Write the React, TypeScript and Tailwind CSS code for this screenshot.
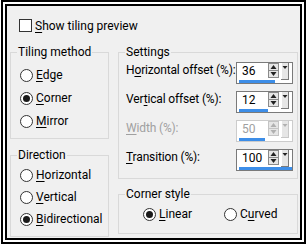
import React from "react";

function U({ children }: { children: React.ReactNode }) {
  return <span className="underline underline-offset-[2px] decoration-[1px]">{children}</span>;
}

function Radio({ checked, label, className = "" }: { checked?: boolean; label: React.ReactNode; className?: string }) {
  return (
    <div className={`flex items-center h-[20px] ${className}`}>
      <span className="w-[13px] h-[13px] rounded-full border border-[#333333] bg-white flex items-center justify-center shrink-0">
        {checked && <span className="w-[7px] h-[7px] rounded-full bg-[#1a1a1a]" />}
      </span>
      <span className="ml-[3px] leading-[16px] whitespace-nowrap">{label}</span>
    </div>
  );
}

function Group({ title, className = "", children }: { title: string; className?: string; children: React.ReactNode }) {
  return (
    <fieldset className={`border border-[#d9d9d9] ${className}`}>
      <legend className="ml-[6px] px-[1px] leading-[16px]">{title}</legend>
      {children}
    </fieldset>
  );
}

function SpinButtons({ disabled }: { disabled?: boolean }) {
  const stroke = disabled ? "#c4c4c4" : "#8a8a8a";
  const fill = disabled ? "#b0b0b0" : "#222222";
  return (
    <svg width="11" height="15" viewBox="0 0 11 15" className="shrink-0">
      <rect x="0.5" y="0.5" width="10" height="14" fill="#e6e6e6" stroke={stroke} />
      <line x1="1" y1="7.5" x2="10" y2="7.5" stroke={stroke} />
      <polygon points="5.5,2 8.5,6 2.5,6" fill={fill} />
      <polygon points="2.5,9 8.5,9 5.5,13" fill={fill} />
    </svg>
  );
}

function DropButton({ disabled }: { disabled?: boolean }) {
  const fill = disabled ? "#b0b0b0" : "#222222";
  return (
    <svg width="8" height="17" viewBox="0 0 8 17" className="shrink-0">
      <rect x="0" y="0" width="8" height="17" fill="#e6e6e6" />
      <line x1="0.5" y1="0" x2="0.5" y2="17" stroke="#ffffff" />
      <line x1="7.5" y1="0" x2="7.5" y2="17" stroke={disabled ? "#c8c8c8" : "#7a7a7a"} />
      <line x1="0" y1="16.5" x2="8" y2="16.5" stroke={disabled ? "#c8c8c8" : "#7a7a7a"} />
      <polygon points="1.5,3 6.5,3 4,6" fill={fill} />
    </svg>
  );
}

function Spin({ value, bar, disabled }: { value: string; bar: number; disabled?: boolean }) {
  return (
    <div
      className={`w-[57px] h-[22px] border bg-white flex flex-col shrink-0 ${
        disabled ? "border-[#cccccc] text-[#a0a0a0]" : "border-[#7a7a7a] text-black"
      }`}
    >
      <div className="flex items-start h-[17px]">
        <span className="w-[31px] pl-[5px] leading-[16px]">{value}</span>
        <SpinButtons disabled={disabled} />
        <span className="w-[2px]" />
        <DropButton disabled={disabled} />
      </div>
      <div className="h-[3px] ml-[2px]">
        <div className="h-[3px] bg-[#3d8ee8]" style={{ width: bar }} />
      </div>
    </div>
  );
}

function Row({ label, children, disabled }: { label: React.ReactNode; children: React.ReactNode; disabled?: boolean }) {
  return (
    <div className="flex items-start h-[22px]">
      <span
        className={`flex-1 min-w-0 leading-[16px] whitespace-nowrap tracking-[-0.15px] ${disabled ? "text-[#a0a0a0]" : ""}`}
      >
        {label}
      </span>
      {children}
    </div>
  );
}

export default function App() {
  return (
    <div className="w-[308px] h-[246px] bg-white pl-[1px] text-[12px] text-black [font-family:Roboto,'Noto_Sans',sans-serif]">
      <div className="w-[305px] h-[244px] border-2 border-black p-[2px] bg-white">
        <div className="w-full h-full border-2 border-black bg-[#f0f0f0]">
          <div className="flex items-center h-[13px] mt-[13px] ml-[12px]">
            <span className="w-[13px] h-[13px] border border-[#333333] bg-white shrink-0" />
            <span className="ml-[3px] leading-[16px]">
              <U>S</U>how tiling preview
            </span>
          </div>
          <div className="flex mt-[12px] ml-[3px]">
            <div className="w-[99px] flex flex-col">
              <Group title="Tiling method" className="h-[95px]">
                <div className="flex flex-col gap-[3px] pt-[5px] pl-[9px]">
                  <Radio label={<><U>E</U>dge</>} />
                  <Radio checked label={<><U>C</U>orner</>} />
                  <Radio label={<><U>M</U>irror</>} />
                </div>
              </Group>
              <Group title="Direction" className="h-[90px] mt-[8px]">
                <div className="flex flex-col gap-[2px] pt-[2px] pl-[9px]">
                  <Radio label={<><U>H</U>orizontal</>} />
                  <Radio label={<><U>V</U>ertical</>} />
                  <Radio checked label={<><U>B</U>idirectional</>} />
                </div>
              </Group>
            </div>
            <div className="w-[180px] ml-[9px] flex flex-col">
              <Group title="Settings" className="h-[135px]">
                <div className="flex flex-col gap-[7px] pt-[2px] pl-[7px] pr-[4px]">
                  <Row label={<>H<U>o</U>rizontal offset (%):</>}>
                    <Spin value="36" bar={36} />
                  </Row>
                  <Row label={<>Ver<U>t</U>ical offset (%):</>}>
                    <Spin value="12" bar={29} />
                  </Row>
                  <Row disabled label={<><U>W</U>idth (%):</>}>
                    <Spin value="50" bar={26} disabled />
                  </Row>
                  <Row label={<><U>T</U>ransition (%):</>}>
                    <Spin value="100" bar={53} />
                  </Row>
                </div>
              </Group>
              <Group title="Corner style" className="h-[48px] mt-[7px]">
                <div className="flex pt-[2px] pl-[24px]">
                  <Radio checked className="w-[81px]" label={<><U>L</U>inear</>} />
                  <Radio label={<>C<U>u</U>rved</>} />
                </div>
              </Group>
            </div>
          </div>
        </div>
      </div>
    </div>
  );
}
